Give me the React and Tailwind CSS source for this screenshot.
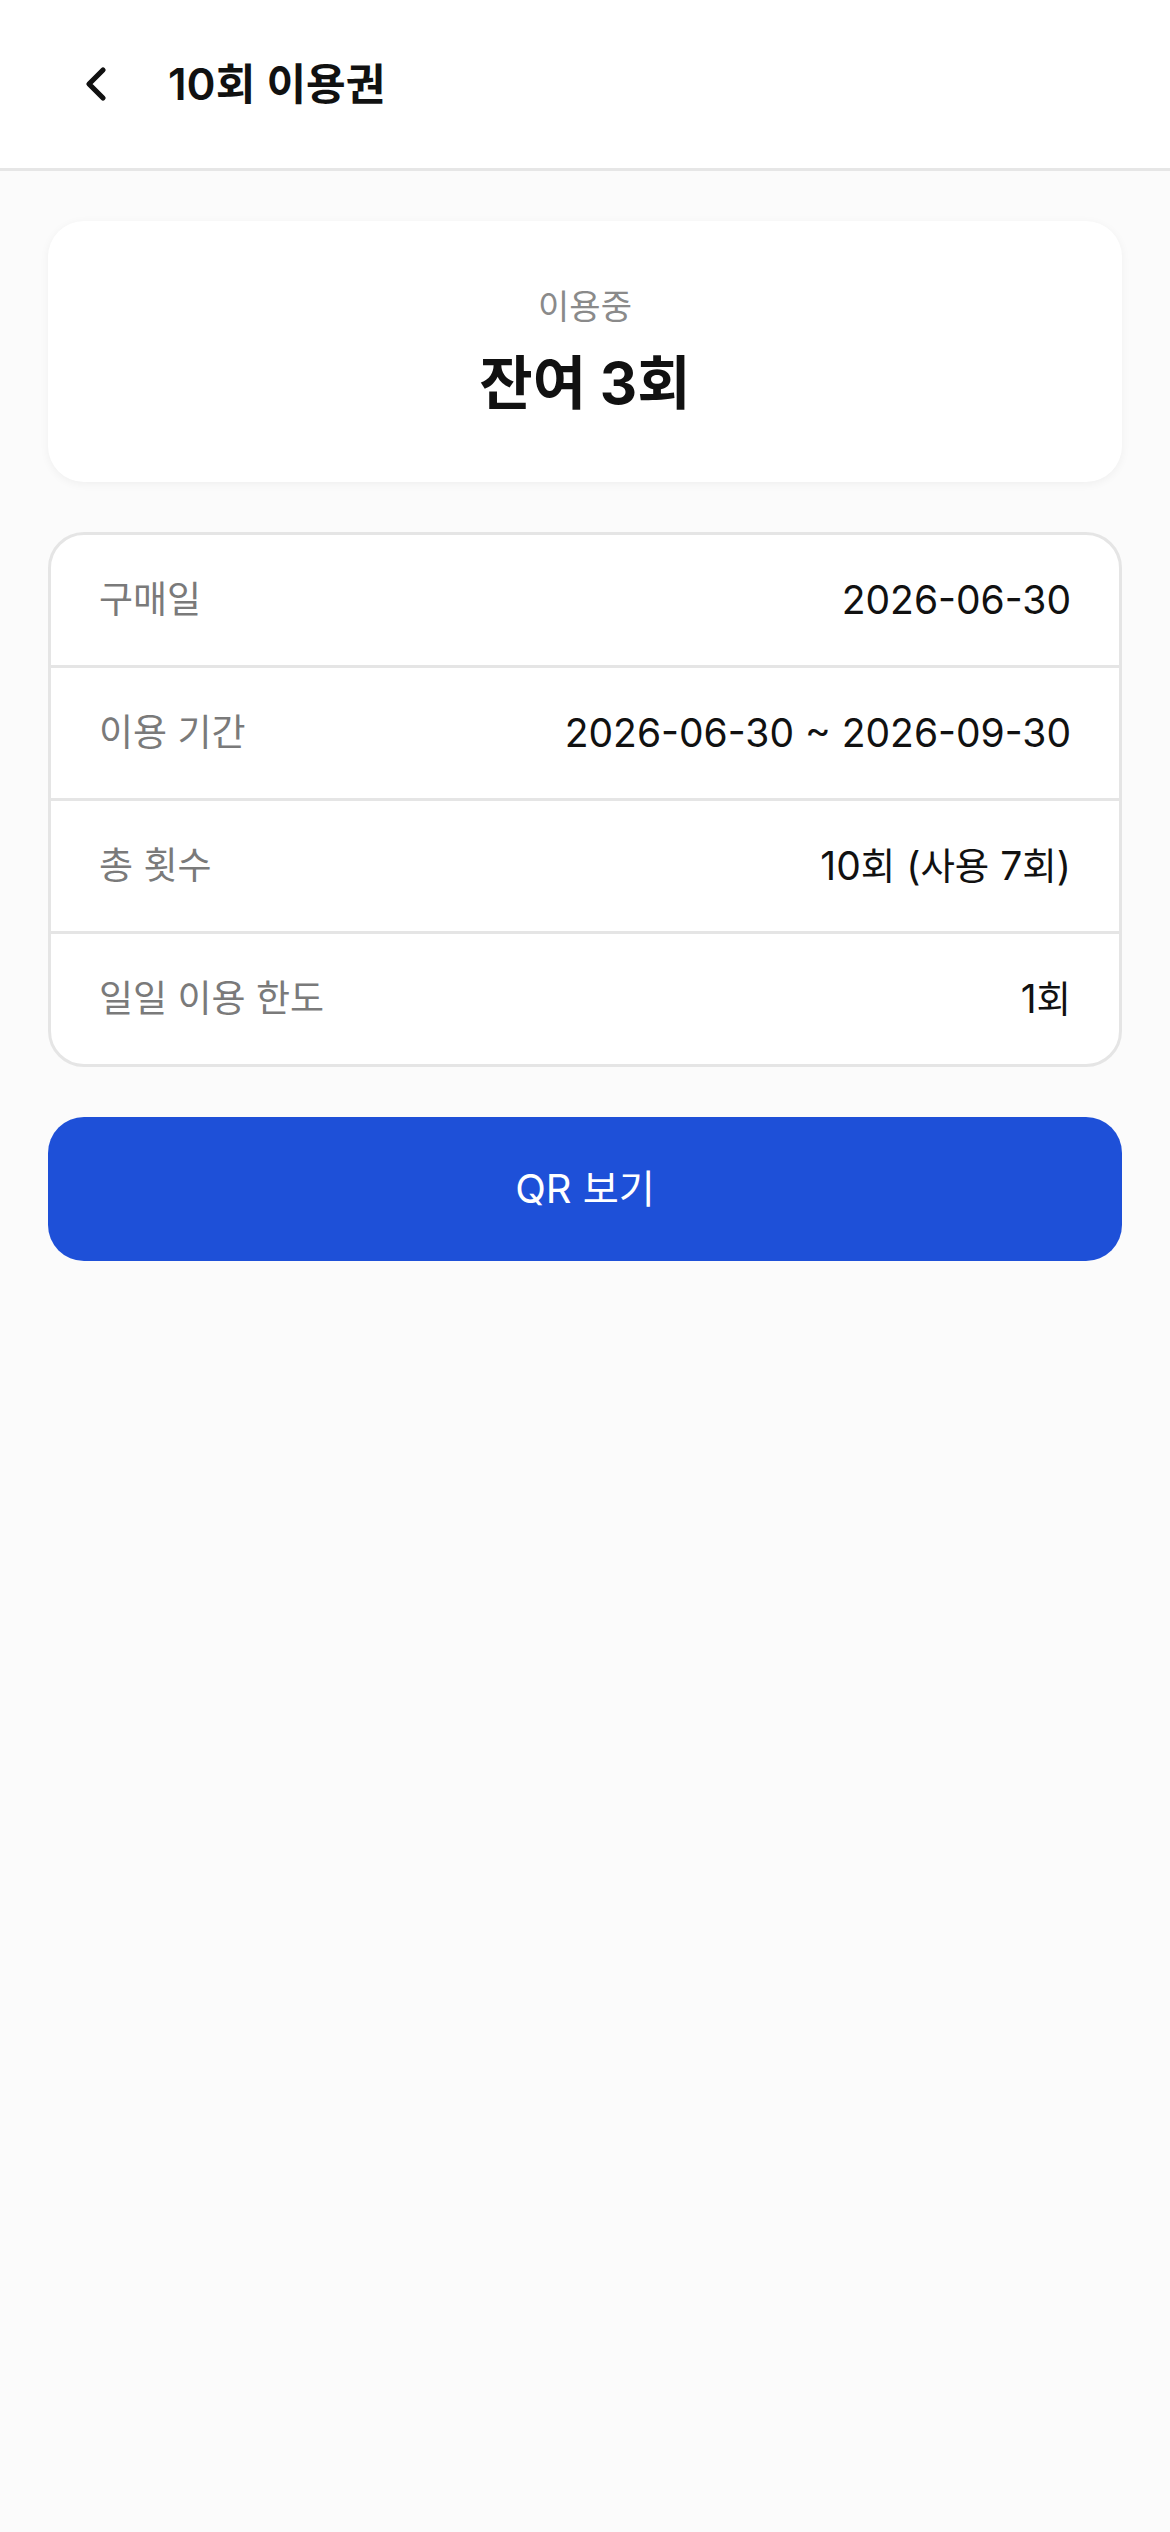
import { ChevronLeft } from 'lucide-react';

const HANGUL = /([\u1100-\u11FF\u3130-\u318F\uAC00-\uD7AF]+)/;

// Latin glyphs come from Inter, Hangul from Noto; Hangul runs get their own size
function Mixed({ text, k }) {
  return text.split(HANGUL).map((part, i) =>
    i % 2 === 1 ? (
      <span key={i} className={k}>
        {part}
      </span>
    ) : (
      part
    )
  );
}

const rows = [
  { label: '구매일', value: '2026-06-30' },
  { label: '이용 기간', value: '2026-06-30 ~ 2026-09-30' },
  { label: '총 횟수', value: '10회 (사용 7회)' },
  { label: '일일 이용 한도', value: '1회' },
];

export default function App() {
  return (
    <div className="min-h-screen bg-[#fbfbfb] font-[Inter,'Noto_Sans_CJK_KR',sans-serif]">
      <header className="h-[171px] bg-white border-b-[3px] border-[#e6e6e6] flex items-center px-[48px] gap-[24px]">
        <button className="w-[96px] h-[96px] flex items-center justify-center text-[#111]" aria-label="뒤로">
          <ChevronLeft size={56} strokeWidth={2.25} />
        </button>
        <h1 className="text-[44px] leading-[56px] font-semibold text-[#111]">
          <Mixed text="10회 이용권" k="text-[0.98em]" />
        </h1>
      </header>

      <main className="px-[48px] pt-[50px] flex flex-col gap-[50px]">
        <section className="h-[261px] bg-white rounded-[36px] shadow-[0_2px_10px_rgba(0,0,0,0.05)] pt-[62px] flex flex-col items-center">
          <p className="text-[34px] leading-[48px] text-[#8a8a8a]">이용중</p>
          <p className="mt-[20px] text-[58px] leading-[64px] font-bold text-[#111]">잔여 3회</p>
        </section>

        <section className="bg-white rounded-[36px] border-[3px] border-[#e5e5e5] overflow-hidden">
          {rows.map((r, i) => (
            <div
              key={r.label}
              className={`px-[48px] flex items-center justify-between ${i > 0 ? 'h-[133px] border-t-[3px] border-[#e5e5e5]' : 'h-[130px]'}`}
            >
              <span className="text-[37px] text-[#7a7a7a]">{r.label}</span>
              <span className="text-[39px] text-[#111]">
                <Mixed text={r.value} k="text-[0.96em]" />
              </span>
            </div>
          ))}
        </section>

        <button className="h-[144px] rounded-[36px] bg-[#1e50d8] text-white text-[40px] font-normal flex items-center justify-center">
          <span>
            <Mixed text="QR 보기" k="text-[0.98em]" />
          </span>
        </button>
      </main>
    </div>
  );
}
